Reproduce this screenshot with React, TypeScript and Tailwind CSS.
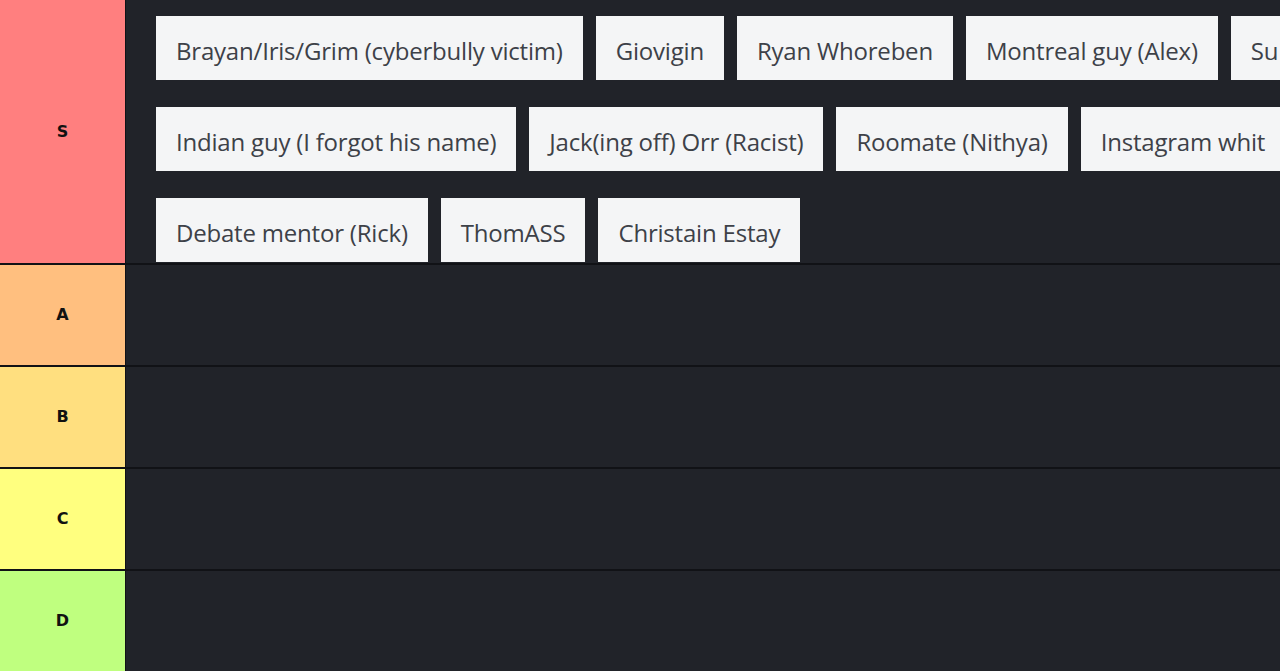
import React from 'react'

type Tier = {
  label: string
  color: string
  rows: string[][]
}

const tiers: Tier[] = [
  {
    label: 'S',
    color: 'bg-[#ff7f7f]',
    rows: [
      ['Brayan/Iris/Grim (cyberbully victim)', 'Giovigin', 'Ryan Whoreben', 'Montreal guy (Alex)', 'Su'],
      ['Indian guy (I forgot his name)', 'Jack(ing off) Orr (Racist)', 'Roomate (Nithya)', 'Instagram whit'],
      ['Debate mentor (Rick)', 'ThomASS', 'Christain Estay'],
    ],
  },
  { label: 'A', color: 'bg-[#ffbf7f]', rows: [] },
  { label: 'B', color: 'bg-[#ffdf7f]', rows: [] },
  { label: 'C', color: 'bg-[#ffff7f]', rows: [] },
  { label: 'D', color: 'bg-[#bfff7f]', rows: [] },
]

const Chip = ({ text }: { text: string }) => (
  <div className="h-16 shrink-0 bg-[#f4f5f6] px-5 pt-[6px] flex items-center text-[24px] tracking-[-0.2px] text-[#3d4148] whitespace-nowrap">
    {text}
  </div>
)

export default function App() {
  return (
    <div
      className="w-[1280px] h-[671px] overflow-hidden bg-[#111216] flex flex-col gap-[2px]"
      style={{ fontFamily: '"Open Sans", "Noto Sans", sans-serif' }}
    >
      {tiers.map((tier, i) => (
        <div key={tier.label} className={`flex ${i === 0 ? 'h-[263px]' : 'flex-1'}`}>
          <div
            className={`w-[125px] shrink-0 ${tier.color} flex items-center justify-center text-[16px] font-bold text-[#111]`}
            style={{ fontFamily: '"DejaVu Sans", Verdana, sans-serif' }}
          >
            {tier.label}
          </div>
          <div className="flex-1 min-w-0 ml-px bg-[#212329] overflow-hidden pt-4 pl-[30px] flex flex-col gap-[27px]">
            {tier.rows.map((row, r) => (
              <div key={r} className="flex gap-[13px]">
                {row.map((t, k) => (
                  <Chip key={k} text={t} />
                ))}
              </div>
            ))}
          </div>
        </div>
      ))}
    </div>
  )
}
